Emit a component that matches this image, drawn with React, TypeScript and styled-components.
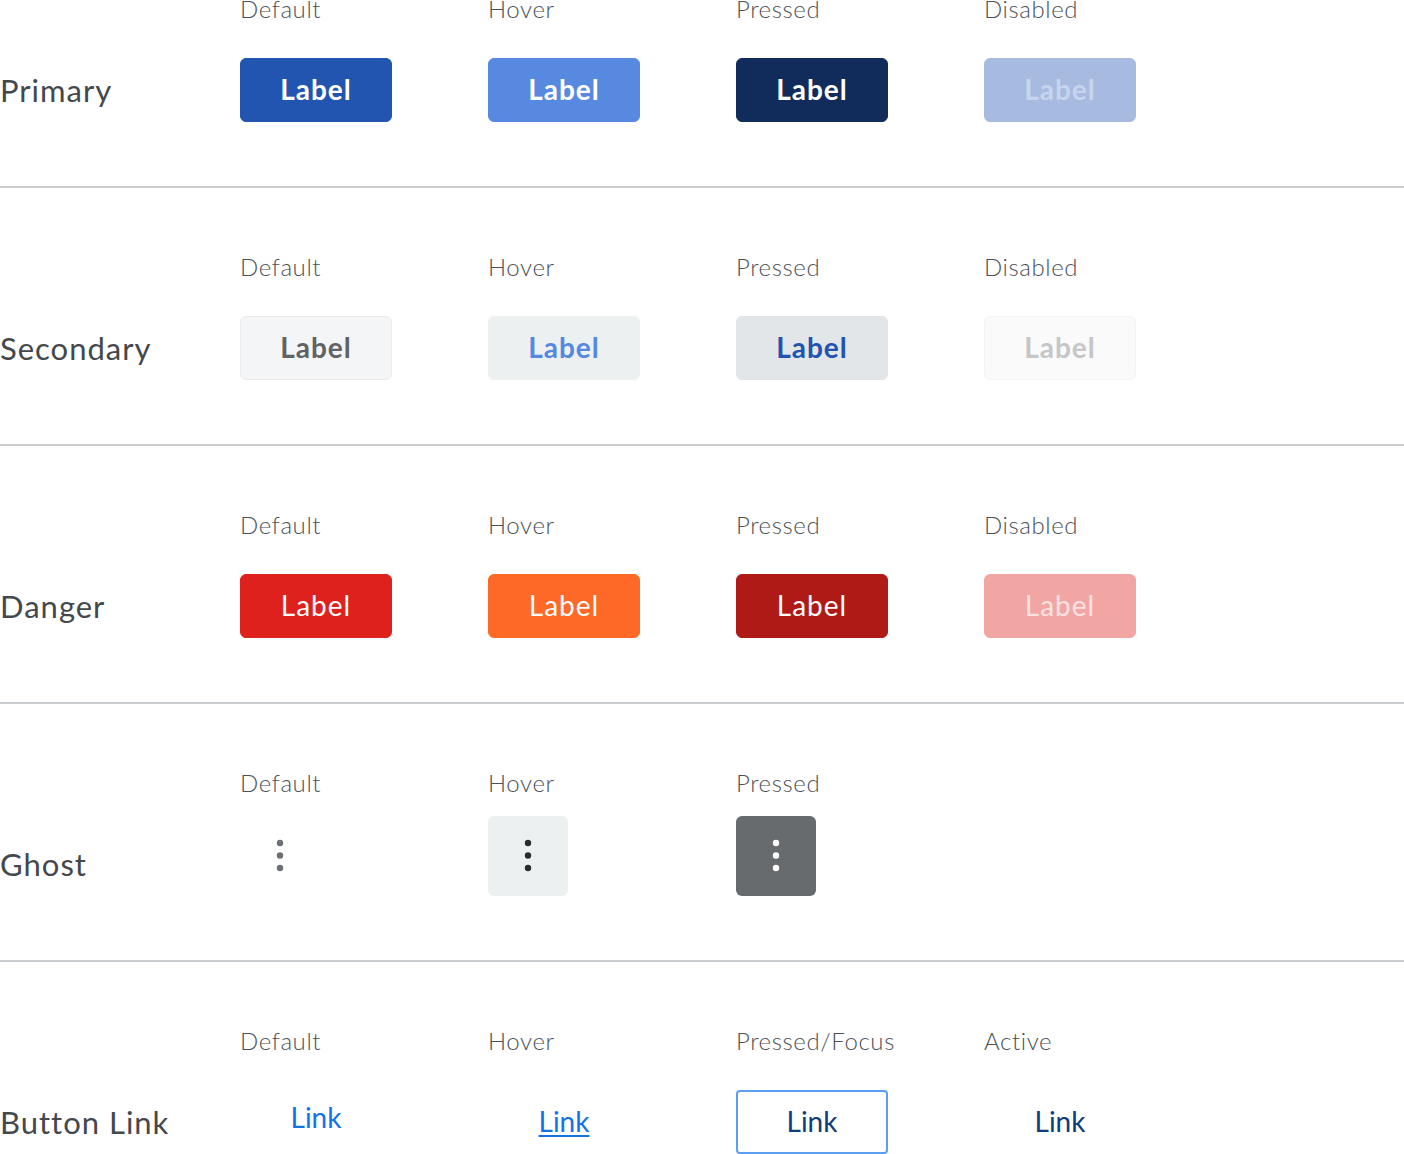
import React from "react";
import styled, { createGlobalStyle, css } from "styled-components";

const GlobalStyle = createGlobalStyle`
  html, body {
    margin: 0;
    padding: 0;
    background: #ffffff;
    font-family: "Lato", "Noto Sans", sans-serif;
  }
  body {
    overflow: hidden;
  }
`;

type Tone = "primary" | "secondary" | "danger";
type State = "default" | "hover" | "pressed" | "disabled";

const palette: Record<Tone, Record<State, { bg: string; text: string; border: string; weight: number }>> = {
  primary: {
    default: { bg: "#2155b0", text: "#ffffff", border: "#2155b0", weight: 700 },
    hover: { bg: "#5889e0", text: "#ffffff", border: "#5889e0", weight: 700 },
    pressed: { bg: "#112b5a", text: "#ffffff", border: "#112b5a", weight: 700 },
    disabled: { bg: "#a7bae0", text: "#c7d4ee", border: "#a7bae0", weight: 700 },
  },
  secondary: {
    default: { bg: "#f4f5f7", text: "#5f6366", border: "#eaecee", weight: 700 },
    hover: { bg: "#edf0f1", text: "#5588e0", border: "#edf0f1", weight: 700 },
    pressed: { bg: "#e3e6e9", text: "#2154b0", border: "#e3e6e9", weight: 700 },
    disabled: { bg: "#fafafb", text: "#c4c6c8", border: "#f3f4f5", weight: 700 },
  },
  danger: {
    default: { bg: "#de211d", text: "#ffffff", border: "#de211d", weight: 400 },
    hover: { bg: "#ff6928", text: "#ffffff", border: "#ff6928", weight: 400 },
    pressed: { bg: "#af1a17", text: "#ffffff", border: "#af1a17", weight: 400 },
    disabled: { bg: "#f1a6a4", text: "#fbe2e1", border: "#f1a6a4", weight: 400 },
  },
};

const Viewport = styled.div`
  height: 1154px;
  overflow: hidden;
`;

const Sheet = styled.div`
  margin-top: -70px;
`;

const Section = styled.section`
  display: flex;
  height: 256px;
  border-bottom: 2px solid #c9cdcf;
`;

const RowTitle = styled.div`
  width: 240px;
  flex: none;
  padding-top: 142px;
  font-size: 31px;
  line-height: 36px;
  letter-spacing: 1px;
  color: #44484c;
  white-space: nowrap;
`;

const Column = styled.div`
  width: 248px;
  flex: none;
  display: flex;
  flex-direction: column;
  justify-content: space-between;
  align-items: flex-start;
  padding: 66px 0 64px;
  box-sizing: border-box;
`;

const StateName = styled.div`
  font-size: 24px;
  font-weight: 300;
  line-height: 26px;
  color: #4b5056;
  letter-spacing: 0.6px;
`;

const LabelButton = styled.button<{ $tone: Tone; $state: State }>`
  width: 152px;
  height: 64px;
  box-sizing: border-box;
  border-radius: 6px;
  font-family: "Lato", "Noto Sans", sans-serif;
  font-size: 28px;
  letter-spacing: 1px;
  padding: 0 0 2px;
  cursor: pointer;
  ${({ $tone, $state }) => {
    const c = palette[$tone][$state];
    return css`
      background: ${c.bg};
      color: ${c.text};
      border: 1px solid ${c.border};
      font-weight: ${c.weight};
    `;
  }}
`;

const GhostButton = styled.button<{ $state: "default" | "hover" | "pressed" }>`
  width: 80px;
  height: 80px;
  border: none;
  border-radius: 6px;
  padding: 0;
  display: flex;
  align-items: center;
  justify-content: center;
  cursor: pointer;
  background: ${({ $state }) =>
    $state === "hover" ? "#edf0f1" : $state === "pressed" ? "#686b6e" : "transparent"};
  color: ${({ $state }) =>
    $state === "hover" ? "#2a2d30" : $state === "pressed" ? "#ffffff" : "#6c7074"};
`;

const LinkButton = styled.button<{ $state: "default" | "hover" | "focus" | "active" }>`
  width: 152px;
  height: 64px;
  box-sizing: border-box;
  border-radius: 4px;
  background: transparent;
  font-family: "Lato", "Noto Sans", sans-serif;
  font-size: 28px;
  font-weight: 400;
  cursor: pointer;
  padding: 0 0 ${({ $state }) => ($state === "default" ? "10px" : "2px")};
  border: 2px solid ${({ $state }) => ($state === "focus" ? "#5a9ff0" : "transparent")};
  color: ${({ $state }) => ($state === "default" || $state === "hover" ? "#1373e6" : "#0f3c7a")};
  text-decoration: ${({ $state }) => ($state === "hover" ? "underline" : "none")};
  text-underline-offset: 3px;
  text-decoration-thickness: 2px;
`;

const Dots = () => (
  <svg width="8" height="34" viewBox="0 0 8 34" aria-hidden="true">
    <circle cx="4" cy="4" r="3.2" fill="currentColor" />
    <circle cx="4" cy="16.5" r="3.2" fill="currentColor" />
    <circle cx="4" cy="29" r="3.2" fill="currentColor" />
  </svg>
);

const states: { key: State; name: string }[] = [
  { key: "default", name: "Default" },
  { key: "hover", name: "Hover" },
  { key: "pressed", name: "Pressed" },
  { key: "disabled", name: "Disabled" },
];

const tones: { key: Tone; name: string }[] = [
  { key: "primary", name: "Primary" },
  { key: "secondary", name: "Secondary" },
  { key: "danger", name: "Danger" },
];

const ghostStates: { key: "default" | "hover" | "pressed"; name: string }[] = [
  { key: "default", name: "Default" },
  { key: "hover", name: "Hover" },
  { key: "pressed", name: "Pressed" },
];

const linkStates: { key: "default" | "hover" | "focus" | "active"; name: string }[] = [
  { key: "default", name: "Default" },
  { key: "hover", name: "Hover" },
  { key: "focus", name: "Pressed/Focus" },
  { key: "active", name: "Active" },
];

export default function App() {
  return (
    <>
      <GlobalStyle />
      <Viewport>
        <Sheet>
          {tones.map((t) => (
            <Section key={t.key}>
              <RowTitle>{t.name}</RowTitle>
              {states.map((s) => (
                <Column key={s.key}>
                  <StateName>{s.name}</StateName>
                  <LabelButton $tone={t.key} $state={s.key}>
                    Label
                  </LabelButton>
                </Column>
              ))}
            </Section>
          ))}

          <Section>
            <RowTitle>Ghost</RowTitle>
            {ghostStates.map((s) => (
              <Column key={s.key}>
                <StateName>{s.name}</StateName>
                <GhostButton $state={s.key} aria-label="More">
                  <Dots />
                </GhostButton>
              </Column>
            ))}
          </Section>

          <Section>
            <RowTitle>Button Link</RowTitle>
            {linkStates.map((s) => (
              <Column key={s.key}>
                <StateName>{s.name}</StateName>
                <LinkButton $state={s.key}>Link</LinkButton>
              </Column>
            ))}
          </Section>
        </Sheet>
      </Viewport>
    </>
  );
}
